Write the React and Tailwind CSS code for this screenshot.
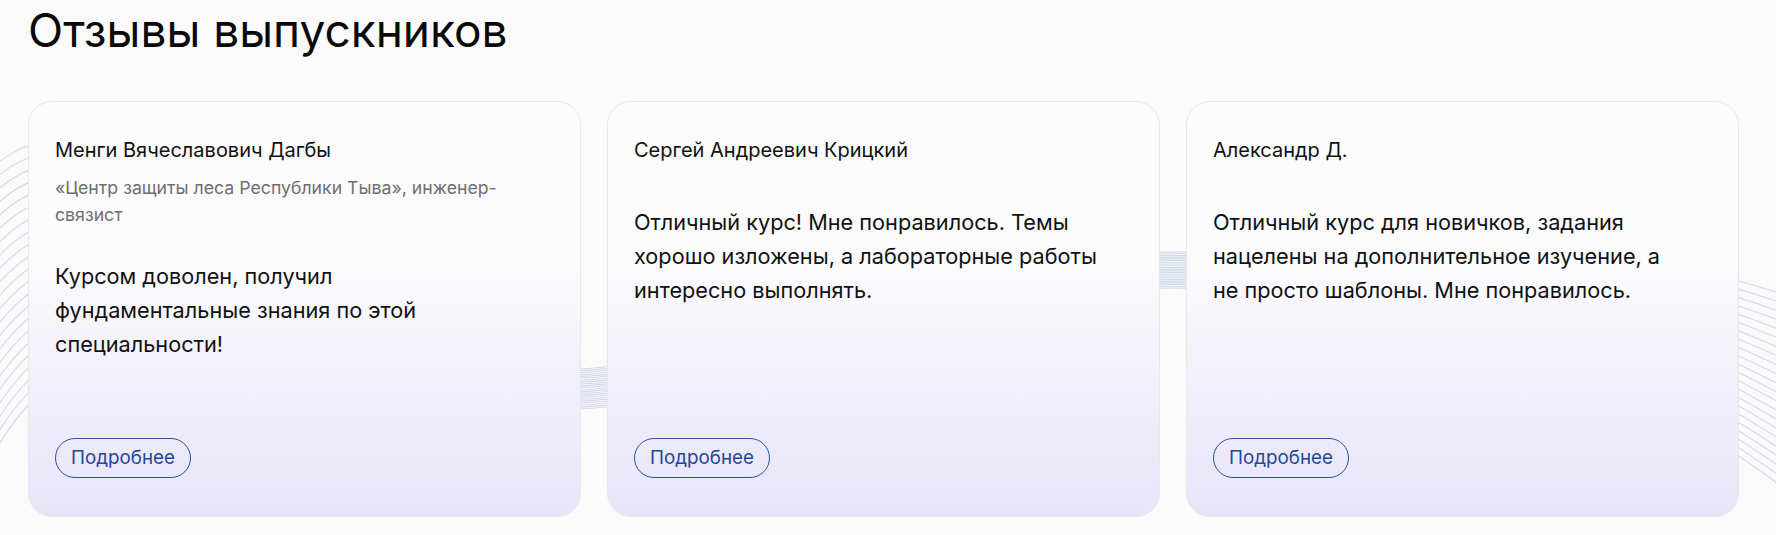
import React from "react";

const reviews = [
  {
    name: "Менги Вячеславович Дагбы",
    role: "«Центр защиты леса Республики Тыва», инженер-связист",
    text: "Курсом доволен, получил фундаментальные знания по этой специальности!",
  },
  {
    name: "Сергей Андреевич Крицкий",
    role: "",
    text: "Отличный курс! Мне понравилось. Темы хорошо изложены, а лабораторные работы интересно выполнять.",
  },
  {
    name: "Александр Д.",
    role: "",
    text: "Отличный курс для новичков, задания нацелены на дополнительное изучение, а не просто шаблоны. Мне понравилось.",
  },
];

function Waves() {
  const n = 22;
  const paths = [];
  for (let i = 0; i < n; i++) {
    const t = i / (n - 1);
    const d =
      `M -10 ${170 + t * 290} ` +
      `C 120 ${40 + t * 180}, 360 ${390 + t * 40}, 594 ${368 + t * 40} ` +
      `C 820 ${350 + t * 40}, 960 ${252 + t * 36}, 1173 ${252 + t * 36} ` +
      `C 1450 ${252 + t * 36}, 1600 ${230 + t * 120}, 1800 ${300 + t * 200}`;
    paths.push(
      <path key={i} d={d} fill="none" stroke="#d2d9e8" strokeWidth="1.1" />
    );
  }
  return (
    <svg
      className="absolute inset-0 h-full w-full"
      viewBox="0 0 1776 535"
      preserveAspectRatio="none"
    >
      {paths}
    </svg>
  );
}

function Card({ r }) {
  return (
    <div className="flex h-[416px] flex-col rounded-[24px] border border-[#e7e7ec] bg-[linear-gradient(180deg,#fbfbfc_38%,#e7e4f8_100%)] pl-[26px] pr-[26px] pt-[35px] pb-[38px]">
      <div className="text-[20px] leading-[27px] text-[#111111]">{r.name}</div>
      <div className="mt-[10px] max-w-[470px] text-[17.7px] leading-[27px] text-[#6e6e73]">
        {r.role}
      </div>
      <div className="mt-[31px] max-w-[470px] text-[21.7px] leading-[34px] text-[#111111]">
        {r.text}
      </div>
      <div className="mt-auto">
        <button className="flex h-[40px] items-center rounded-full border border-[#2c4f9e] px-[15px] text-[18.8px] text-[#23489a]">
          Подробнее
        </button>
      </div>
    </div>
  );
}

export default function App() {
  return (
    <div className="relative min-h-[535px] w-full overflow-hidden bg-[#fafafa] font-['Inter','Noto_Sans',sans-serif]">
      <Waves />
      <div className="relative pl-[28px] pr-[37px] pt-[3px]">
        <h1 className="text-[46px] font-normal leading-[54px] text-[#0a0a0a]">
          Отзывы выпускников
        </h1>
        <div className="mt-[44px] grid grid-cols-3 gap-[26px]">
          {reviews.map((r, i) => (
            <Card key={i} r={r} />
          ))}
        </div>
      </div>
    </div>
  );
}
